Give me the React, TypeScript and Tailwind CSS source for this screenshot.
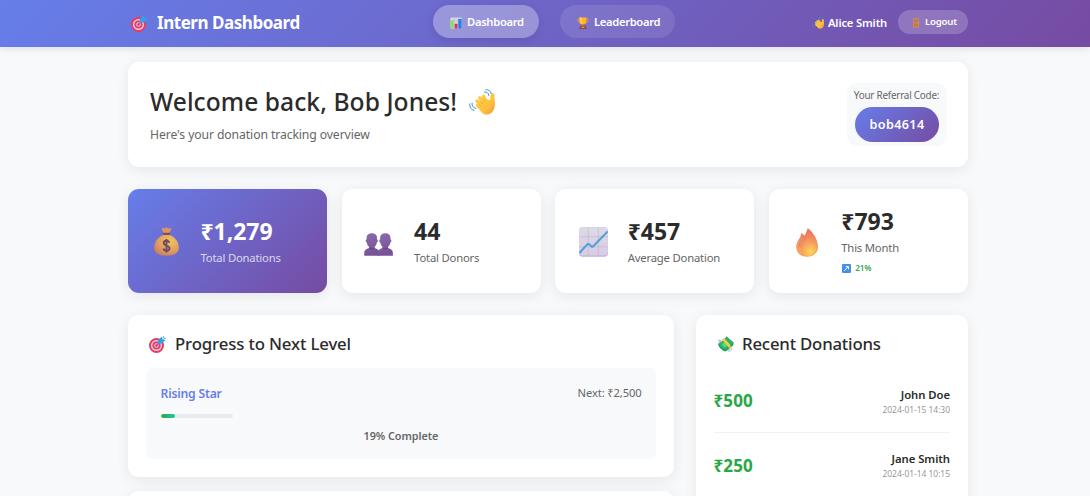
import type { ReactNode } from "react";

type IconProps = { className: string };

function Target({ className }: IconProps) {
  return (
    <svg viewBox="0 0 34 34" className={className}>
      <circle cx="15" cy="19" r="15" fill="#ea3a5e" />
      <circle cx="15" cy="19" r="11" fill="#e0cfe6" />
      <circle cx="15" cy="19" r="8.2" fill="#ea3a66" />
      <circle cx="15" cy="19" r="4.6" fill="#e0cfe6" />
      <circle cx="15" cy="19" r="2.4" fill="#d62d5b" />
      <path d="M15 19 L25 9" stroke="#8a5bb0" strokeWidth="1.8" />
      <path d="M17.5 15.5 L18.5 8 L25 1.5 L26.5 6.5 L32.5 8.5 L26 15 Z" fill="#2da3ee" />
      <path d="M25 2 L26.5 7.5 L32.5 9 M29 0.5 L29.5 4.5 L33.5 5" stroke="#3f9be6" strokeWidth="1.8" fill="none" />
    </svg>
  );
}

function BarChart({ className }: IconProps) {
  return (
    <svg viewBox="0 0 32 32" className={className}>
      <rect x="1" y="1" width="30" height="30" rx="3" fill="#dcd3e8" />
      <path d="M1 10h30M1 20h30M11 1v30M21 1v30" stroke="#bcb0cc" strokeWidth="1.3" />
      <path d="M3 9h7v22H4a3 3 0 0 1-3-3V11z" fill="#86e067" />
      <rect x="12.5" y="18" width="7.5" height="13" fill="#e5266e" />
      <path d="M22 5h9v23a3 3 0 0 1-3 3h-6z" fill="#1f86dd" />
    </svg>
  );
}

function Trophy({ className }: IconProps) {
  return (
    <svg viewBox="0 0 32 32" className={className}>
      <path d="M9 5H3v4c0 5 3 7 8 7M23 5h6v4c0 5-3 7-8 7" fill="none" stroke="#f49a2c" strokeWidth="2.6" />
      <path d="M7 1h18v9c0 6-4 10-9 10S7 16 7 10z" fill="#ffb52e" />
      <path d="M7 1h6v18C9 18 7 14 7 10z" fill="#ffcf4a" />
      <path d="M14 19h4l1 5h-6z" fill="#e87722" />
      <path d="M9 23h14l3 9H6z" fill="#8c4a42" />
      <rect x="12" y="26" width="8" height="3" fill="#f2a53d" />
    </svg>
  );
}

function Wave({ className }: IconProps) {
  return (
    <svg viewBox="0 0 34 34" className={className}>
      <defs>
        <linearGradient id="hand" x1="0" y1="0" x2="1" y2="1">
          <stop offset="0" stopColor="#ffd04f" />
          <stop offset="0.6" stopColor="#ffc13d" />
          <stop offset="1" stopColor="#f0943a" />
        </linearGradient>
      </defs>
      <g stroke="#ffc942" strokeLinecap="round" fill="none">
        <path d="M20 25 L10.5 16" strokeWidth="4.6" />
        <path d="M22 22 L14 11.5" strokeWidth="4.6" />
        <path d="M24 19 L19 9.5" strokeWidth="4.4" />
        <path d="M18 27 L11 21.5" strokeWidth="4.2" />
      </g>
      <path d="M13 19 L20 11 L25 14 C27 15 28.2 14.5 28 11.5 C28 7.5 29 5 31.5 5.5 C34 6 33.2 9 33.5 13 C34.5 21 34 27 29.5 31 C25 34.5 19.5 34 16 30 L10.5 23 Z" fill="url(#hand)" />
      <path d="M13.5 15 L18 19.5 M17 11.5 L21.5 16.5 M12.5 20 L16.5 23" stroke="#eda02e" strokeWidth="0.9" fill="none" />
      <path d="M20 4 C23 3.5 25.5 5 26 8.5 M22 1 C25.5 0.5 28.5 2.5 29 6 M4 18.5 C3.5 22 5.5 24.5 9 25.5 M1 19.5 C0.5 24 2.5 27 6.5 28" fill="none" stroke="#3a92d5" strokeWidth="1.3" strokeLinecap="round" />
    </svg>
  );
}

function Door({ className }: IconProps) {
  return (
    <svg viewBox="0 0 18 30" className={className}>
      <rect width="18" height="30" rx="1.5" fill="#c9875e" />
      <path d="M4 4h4v8H4zM10 4h4v8h-4zM4 16h4v10H4zM10 16h4v10h-4z" fill="#b87350" />
      <circle cx="15.5" cy="15" r="1.4" fill="#f5d070" />
    </svg>
  );
}

function MoneyBag({ className }: IconProps) {
  return (
    <svg viewBox="0 0 25 29" className={className}>
      <defs>
        <radialGradient id="bag" cx="0.65" cy="0.3" r="0.85">
          <stop offset="0" stopColor="#f0c55c" />
          <stop offset="0.55" stopColor="#dea05e" />
          <stop offset="1" stopColor="#c97566" />
        </radialGradient>
      </defs>
      <path d="M8.3 0.8 C10 2 10.8 1.5 12.5 0.3 C14.2 1.5 15 2 16.8 0.8 L17.2 2.5 L15.2 6.2 H9.8 L7.8 2.5 Z" fill="#dc9560" />
      <path d="M9 8 H16 C20 9.5 24.8 14 24.8 20.5 C24.8 26 21 28.6 12.5 28.6 C4 28.6 0.2 26 0.2 20.5 C0.2 14 5 9.5 9 8Z" fill="url(#bag)" />
      <rect x="8.8" y="5.7" width="7.4" height="2.2" rx="1" fill="#785064" />
      <path d="M15.3 15.8 C14.9 14.3 13.8 13.8 12.5 13.8 C10.8 13.8 9.7 14.7 9.7 16.1 C9.7 19.4 15.5 17.8 15.5 21.3 C15.5 22.8 14.2 23.8 12.5 23.8 C10.8 23.8 9.7 23 9.4 21.5 M12.5 12 V25.6" fill="none" stroke="#714a62" strokeWidth="1.9" />
    </svg>
  );
}

function People({ className }: IconProps) {
  return (
    <svg viewBox="0 0 29 23" className={className}>
      <defs>
        <linearGradient id="person" x1="0" y1="0" x2="0.3" y2="1">
          <stop offset="0" stopColor="#8d6cae" />
          <stop offset="1" stopColor="#765397" />
        </linearGradient>
      </defs>
      {[0, 13.5].map((x) => (
        <g key={x} transform={`translate(${x} 0)`} fill="url(#person)">
          <path d="M7.8 0.3 C11 0.3 13 1.8 13 5 V6.5 C14.2 6.5 14.2 9.3 12.9 9.3 C12.6 11.5 11.8 12.9 10.5 14 V15 C13.4 15.7 15.4 17 15.4 20 V22.8 H0.2 V20 C0.2 17 2.2 15.7 5.1 15 V14 C3.8 12.9 3 11.5 2.7 9.3 C1.4 9.3 1.4 6.5 2.6 6.5 V5 C2.6 1.8 4.6 0.3 7.8 0.3Z" />
          <path d="M5.1 14 C6.5 15.2 9 15.2 10.5 14 V15.4 C9 16.8 6.5 16.8 5.1 15.4Z" fill="#6a488b" />
        </g>
      ))}
    </svg>
  );
}

function LineChart({ className }: IconProps) {
  return (
    <svg viewBox="0 0 29 30" className={className}>
      <defs>
        <linearGradient id="sheet" x1="0" y1="0" x2="0" y2="1">
          <stop offset="0" stopColor="#dedae4" />
          <stop offset="1" stopColor="#d9cbe8" />
        </linearGradient>
      </defs>
      <rect y="0.3" width="29" height="29.4" rx="3.5" fill="#c3add5" />
      <rect y="0.3" width="29" height="28.3" rx="3.5" fill="url(#sheet)" />
      <path d="M0 9.7h29M0 19.8h29M9.3 0.3v28.3M19.3 0.3v28.3" stroke="#c5bfd0" strokeWidth="0.9" />
      <path d="M0.5 26 L8 17.6 Q9.4 16.2 10.7 17.6 L12.4 19.4 Q13.3 20.2 14.3 19.2 L28.7 4.5" fill="none" stroke="#4ba0dc" strokeWidth="2" />
    </svg>
  );
}

function Fire({ className }: IconProps) {
  return (
    <svg viewBox="0 0 22 29" className={className}>
      <defs>
        <linearGradient id="flame" x1="0.5" y1="0" x2="0.5" y2="1">
          <stop offset="0" stopColor="#ef6a62" />
          <stop offset="0.5" stopColor="#f49a62" />
          <stop offset="1" stopColor="#f5a95e" />
        </linearGradient>
        <radialGradient id="ember" cx="0.6" cy="0.75" r="0.6">
          <stop offset="0" stopColor="#ffd75a" />
          <stop offset="1" stopColor="#f79b5c" />
        </radialGradient>
      </defs>
      <path d="M5.3 5.2 C6.6 5.5 7.8 6.4 8.3 7.8 C10 5.8 10.7 3 11.7 0.3 C15 2.4 22 10 22 18.5 C22 25 17.5 28.8 11 28.8 C4.5 28.8 0.2 25 0.2 18.5 C0.2 13 4.8 10.5 5.3 5.2Z" fill="url(#flame)" />
      <path d="M13.5 11 C17 13 20.5 16 20.5 20.5 C20.5 25 17 28 12.5 28 C8 28 5.3 25 5.3 21 C5.3 17 9 16.2 13.5 11Z" fill="url(#ember)" />
      <path d="M8.3 7.8 C7 11 3 14 2.8 19 M10.5 8 C9.5 12 5 14 4.8 19.5" stroke="#d97b63" strokeWidth="0.8" fill="none" />
    </svg>
  );
}

function FlyingMoney({ className }: IconProps) {
  return (
    <svg viewBox="0 0 34 34" className={className}>
      <path d="M1 7 L10 8 L6 14 C4 12 4 10 1 7Z M2 13 L8 14 L5 19Z" fill="#b9c1c8" />
      <path d="M19 30 L26 24 L27 33 C25 31 23 31 19 30Z M26 25 L30 23 L30 30Z" fill="#c5cbd1" />
      <path d="M19 1 L33 13 C34 17 31 20 28 22 L17 31 C10 29 4 23 2 17 C8 13 15 7 19 1Z" fill="#159c50" />
      <path d="M19 1 L33 13 L17 28 C10 26 5 20 3 15 C9 12 15 7 19 1Z" fill="#25b764" />
      <ellipse cx="15" cy="18" rx="5" ry="4" transform="rotate(40 15 18)" fill="#58d884" />
      <path d="M10 7 L14 4 L27 18 L27 23 L24 24Z" fill="#ffc747" />
    </svg>
  );
}

function UpRight({ className }: IconProps) {
  return (
    <svg viewBox="0 0 18 18" className={className}>
      <rect width="18" height="18" rx="2" fill="#4590ea" />
      <path d="M4.5 13.5 L12 6 M7.5 5 H13 V10.5" fill="none" stroke="#fff" strokeWidth="2" />
    </svg>
  );
}

const card = "rounded-[11px] bg-white shadow-[0_3px_14px_rgba(0,0,0,0.08)]";

type StatProps = { icon: ReactNode; value: string; label: string; accent?: boolean; trend?: string };

function Stat({ icon, value, label, accent, trend }: StatProps) {
  return (
    <div
      className={
        accent
          ? "flex h-[104px] items-center rounded-[11px] bg-[linear-gradient(135deg,#667eea_0%,#764ba2_100%)] pl-[22px] text-white shadow-[0_3px_14px_rgba(0,0,0,0.08)]"
          : `flex h-[104px] items-center pl-[22px] text-[#2b2b2b] ${card}`
      }
    >
      <div className="flex w-[32px] justify-center pt-[2px]">{icon}</div>
      <div className="ml-[18.5px] pt-[1px]">
        <div className="text-[23px] leading-[28px] font-bold tracking-[-0.04px]">{value}</div>
        <div
          className={
            accent
              ? "mt-[4px] text-[11.3px] leading-[18px] tracking-[-0.2px] text-white/75"
              : "mt-[4px] text-[11.3px] leading-[18px] tracking-[-0.2px] text-[#666]"
          }
        >
          {label}
        </div>
        {trend && (
          <div className="mt-[3px] flex items-center gap-[4px] pl-px text-[8.2px] leading-[16px] font-semibold tracking-[-0.15px] text-[#3aa652]">
            <UpRight className="size-[9px]" />
            {trend}
          </div>
        )}
      </div>
    </div>
  );
}

const donations = [
  { amount: "₹500", name: "John Doe", date: "2024-01-15 14:30" },
  { amount: "₹250", name: "Jane Smith", date: "2024-01-14 10:15" },
];

export default function App() {
  return (
    <div className="h-[496px] overflow-hidden bg-[#f8f9fa] font-['Noto_Sans','Open_Sans',sans-serif] text-[#2b2b2b]">
      <header className="flex h-[47px] justify-center bg-[linear-gradient(135deg,#667eea_0%,#764ba2_100%)] pl-[6px] text-white shadow-[0_2px_8px_rgba(0,0,0,0.1)]">
        <div className="flex h-[43px] w-[834px] items-center">
          <div className="flex w-[302px] items-center gap-[9px]">
            <Target className="mt-[3px] size-[17px]" />
            <span className="pt-[3px] text-[17px] leading-[24px] font-bold tracking-[-0.46px]">Intern Dashboard</span>
          </div>
          <nav className="flex w-[379px] gap-[21px] text-[11.2px] font-semibold">
            <div className="flex h-[33px] w-[106px] items-center rounded-full bg-white/30 pt-[2px] pl-[17px] shadow-[0_3px_10px_rgba(0,0,0,0.1)]">
              <BarChart className="mr-[5px] size-[12px]" />
              <span className="tracking-[-0.3px]">Dashboard</span>
            </div>
            <div className="flex h-[33px] w-[115px] items-center rounded-full bg-white/10 pt-[2px] pl-[17px]">
              <Trophy className="mr-[5px] size-[12px]" />
              <span className="tracking-[-0.32px]">Leaderboard</span>
            </div>
          </nav>
          <Wave className="mt-[3px] size-[12px]" />
          <span className="ml-[4px] pt-[3px] text-[11.2px] font-semibold tracking-[-0.15px]">Alice Smith</span>
          <div className="mt-px -mr-[3px] ml-auto flex h-[24px] w-[70px] shrink-0 items-center rounded-full bg-white/20 pt-px pl-[15px]">
            <Door className="mr-[6px] h-[10px] w-[6px]" />
            <span className="text-[9.6px] font-semibold tracking-[-0.2px]">Logout</span>
          </div>
        </div>
      </header>

      <main className="ml-[128px] w-[840px] pt-[15px]">
        <section className={`flex h-[105px] justify-between pr-[21.5px] pl-[22px] ${card}`}>
          <div className="pt-[23px]">
            <h1 className="flex items-center text-[24.6px] leading-[34px] font-medium">
              <span className="tracking-[0.06px]">Welcome back, Bob Jones!</span>
              <Wave className="ml-[12px] size-[26px]" />
            </h1>
            <p className="mt-[5.5px] text-[12.2px] leading-[20px] tracking-[-0.1px] text-[#666]">
              Here's your donation tracking overview
            </p>
          </div>
          <div className="mt-[21px] flex h-[63px] w-[100px] flex-col items-center rounded-[10px] bg-[#f8f9fa] pt-[5px]">
            <span className="text-[9.9px] leading-[15px] tracking-[-0.22px] whitespace-nowrap text-[#666]">
              Your Referral Code:
            </span>
            <span className="mt-[4px] flex h-[35px] w-[84px] items-center justify-center rounded-full bg-[linear-gradient(135deg,#667eea_0%,#764ba2_100%)] pt-px pl-px text-[12.6px] font-semibold tracking-[0.4px] text-white">
              bob4614
            </span>
          </div>
        </section>

        <section className="mt-[22px] grid grid-cols-4 gap-[14.4px]">
          <Stat accent icon={<MoneyBag className="-mt-px h-[29px] w-[25px]" />} value="₹1,279" label="Total Donations" />
          <Stat icon={<People className="mt-[5px] -ml-[2px] h-[23px] w-[29px]" />} value="44" label="Total Donors" />
          <Stat icon={<LineChart className="h-[30px] w-[29px]" />} value="₹457" label="Average Donation" />
          <Stat icon={<Fire className="h-[29px] w-[22px]" />} value="₹793" label="This Month" trend="21%" />
        </section>

        <section className="mt-[22px] flex items-start gap-[21.5px]">
          <div className="flex w-[546px] flex-col gap-[14px]">
            <div className={`h-[162px] px-[18px] pt-[17px] ${card}`}>
              <h2 className="flex items-center pl-[3px] text-[16.8px] leading-[24px] font-medium tracking-[-0.15px]">
                <Target className="mr-[9px] size-[17px]" />
                Progress to Next Level
              </h2>
              <div className="mt-[12px] h-[91px] rounded-[7px] bg-[#f8f9fa] px-[14.5px] pt-[15px]">
                <div className="flex justify-between leading-[20px]">
                  <span className="pt-px text-[12.2px] leading-[20px] font-semibold tracking-[-0.2px] text-[#667eea]">Rising Star</span>
                  <span className="text-[11.2px] tracking-[-0.13px] text-[#666]">Next: ₹2,500</span>
                </div>
                <div className="mt-[10px] h-[4px] w-[72px] overflow-hidden rounded-full bg-[#e9ecef]">
                  <div className="h-full w-[14px] rounded-full bg-[linear-gradient(90deg,#28a745,#20c997)]" />
                </div>
                <div className="mt-[9px] text-center text-[10.8px] leading-[18px] font-semibold tracking-[-0.05px] text-[#666]">
                  19% Complete
                </div>
              </div>
            </div>
            <div className={`h-[60px] ${card}`} />
          </div>

          <div className={`h-[240px] flex-1 px-[18px] pt-[17px] ${card}`}>
            <h2 className="flex items-center pl-[3px] text-[16.8px] leading-[24px] font-medium tracking-[-0.2px]">
              <FlyingMoney className="mr-[8.5px] size-[17px]" />
              Recent Donations
            </h2>
            <div className="mt-[12px]">
              {donations.map((d) => (
                <div key={d.name} className="flex h-[64.5px] items-center justify-between border-b border-[#eff1f3]">
                  <span className="pt-[3px] text-[17px] leading-[24px] font-bold tracking-[0.15px] text-[#28a745]">{d.amount}</span>
                  <div className="pt-[3px] text-right">
                    <div className="text-[11.3px] leading-[17px] font-semibold tracking-[-0.05px]">{d.name}</div>
                    <div className="text-[8.5px] leading-[14px] tracking-[-0.05px] text-[#999]">{d.date}</div>
                  </div>
                </div>
              ))}
            </div>
          </div>
        </section>
      </main>
    </div>
  );
}
